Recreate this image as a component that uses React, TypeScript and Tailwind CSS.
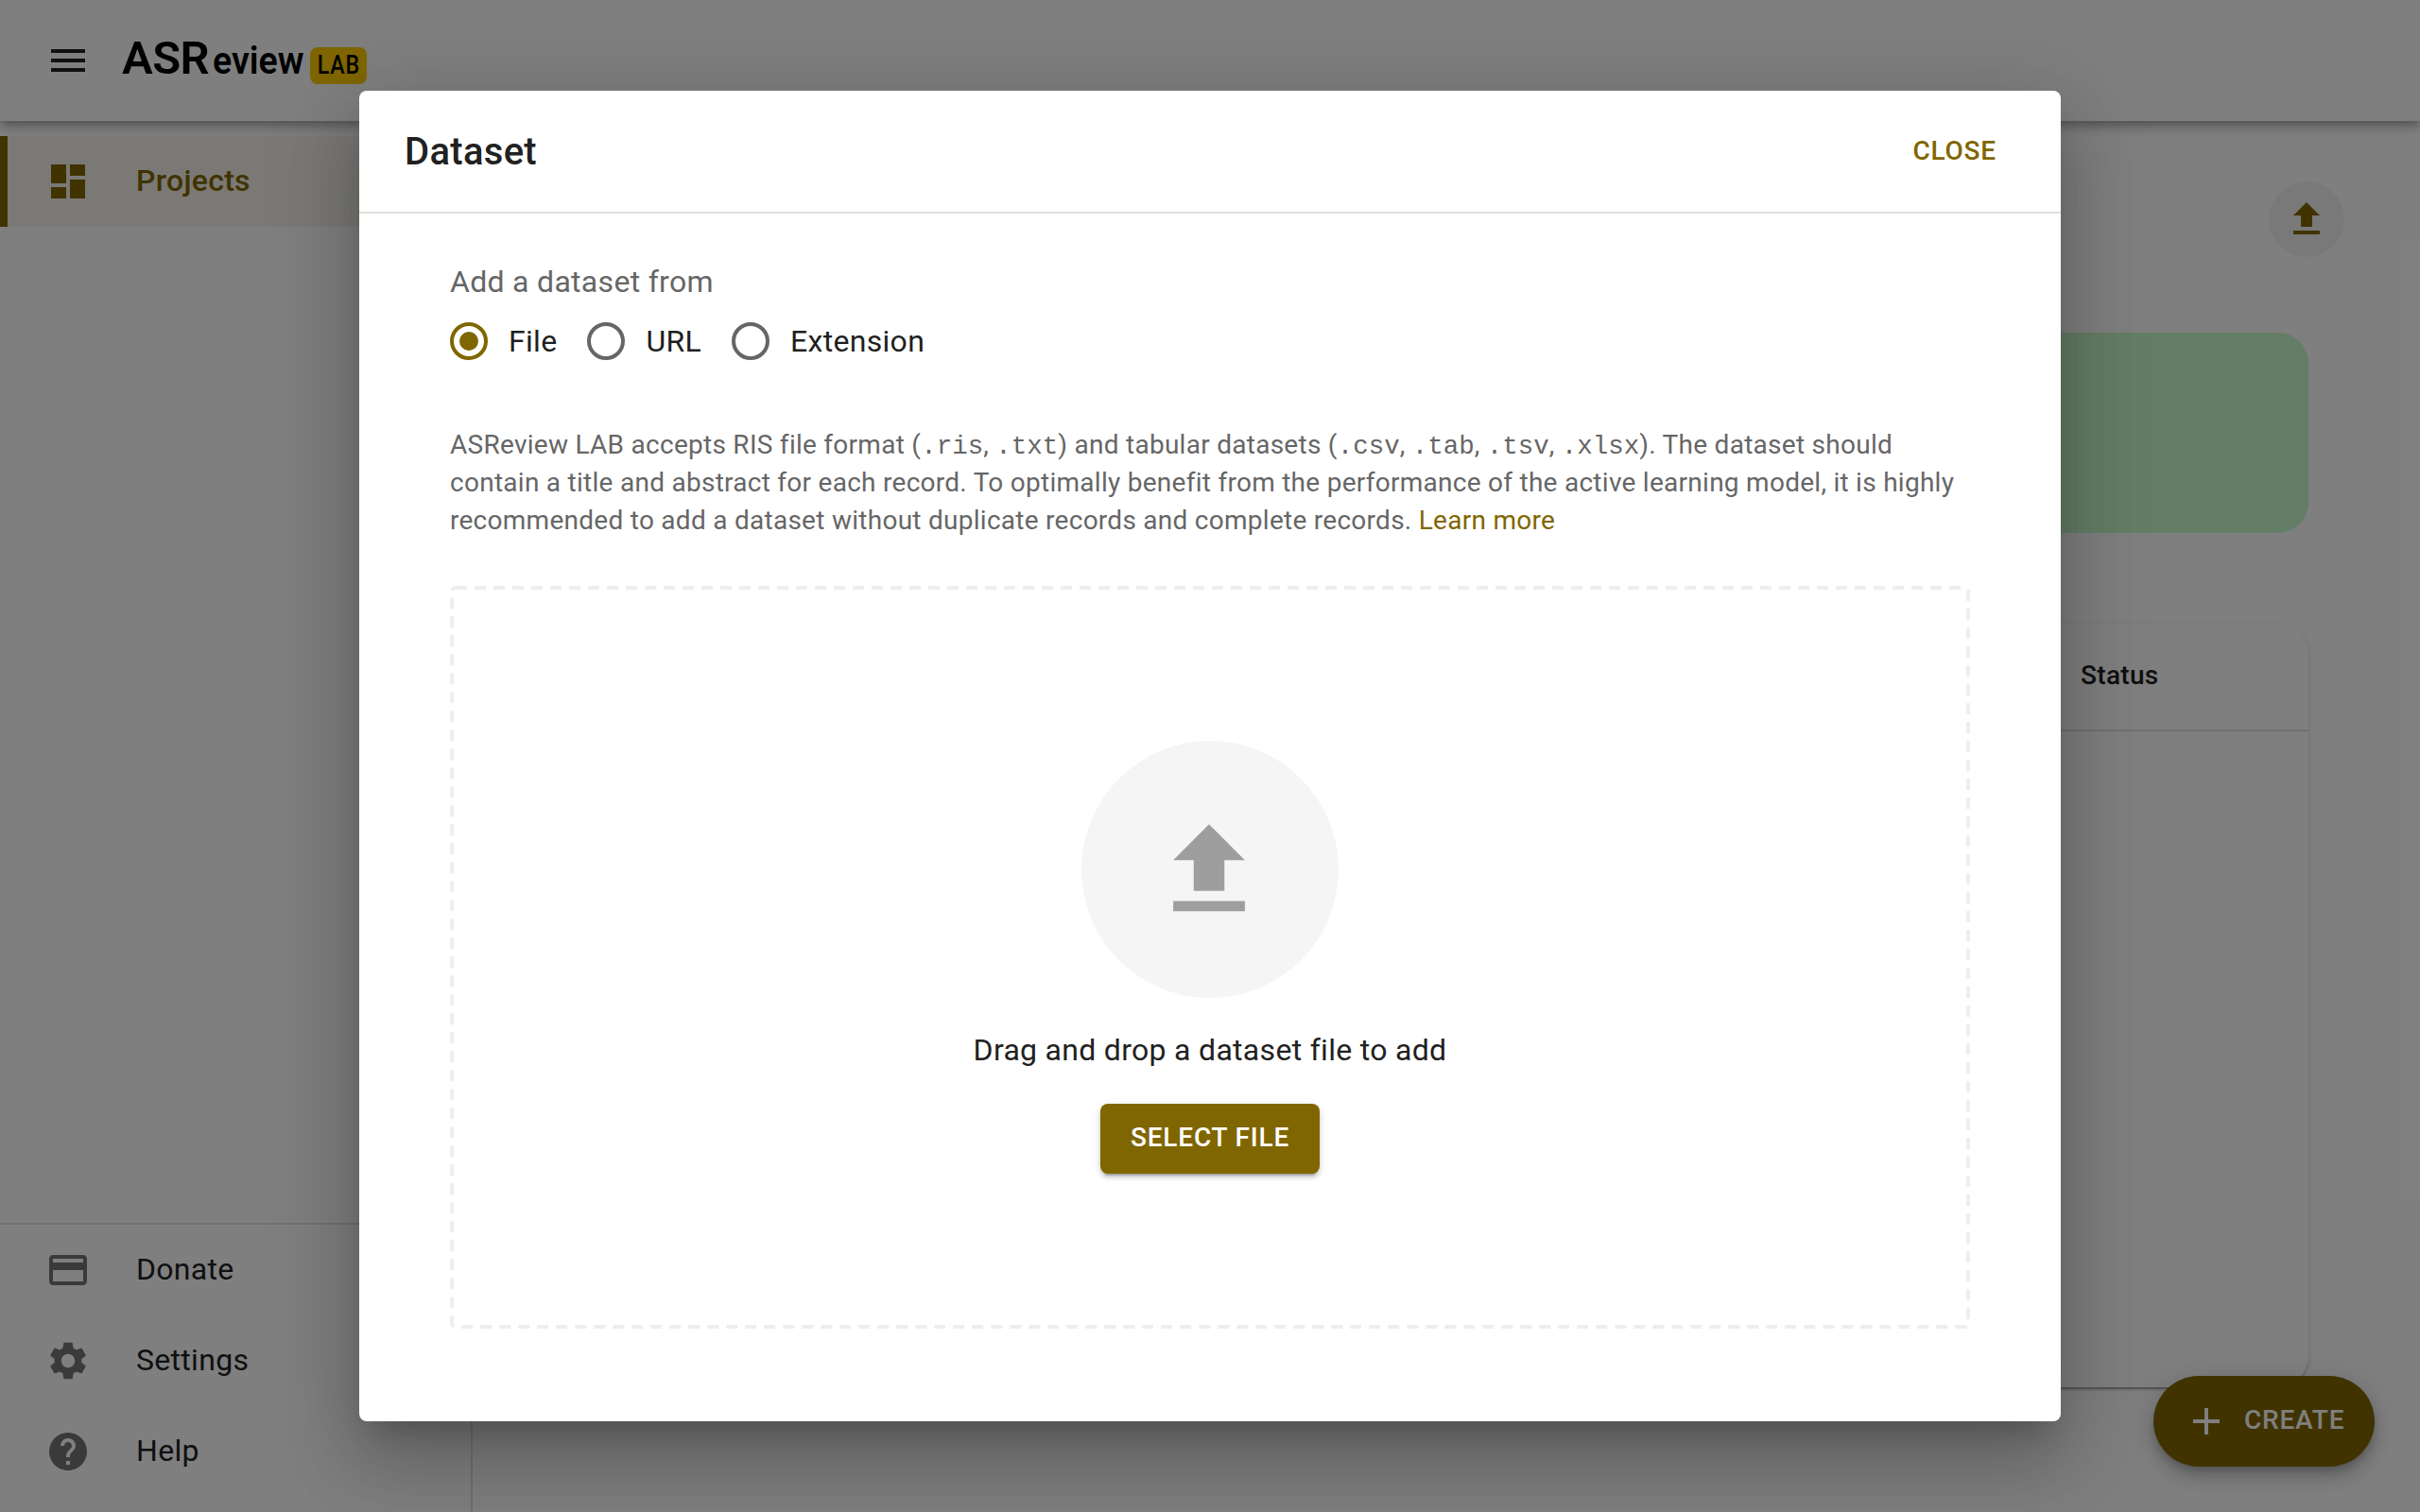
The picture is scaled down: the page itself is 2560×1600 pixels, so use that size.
import { MdAdd, MdDashboard, MdFileUpload, MdHelp, MdMenu, MdPayment, MdSettings } from "react-icons/md";

const bottomItems = [
  { label: "Donate", icon: MdPayment },
  { label: "Settings", icon: MdSettings },
  { label: "Help", icon: MdHelp },
];

const radios = [
  { label: "File", checked: true },
  { label: "URL", checked: false },
  { label: "Extension", checked: false },
];

function Radio({ label, checked }: { label: string; checked: boolean }) {
  return (
    <label className="flex items-center gap-[22px]">
      <span
        className={`flex h-10 w-10 items-center justify-center rounded-full border-[4px] ${
          checked ? "border-[#806600]" : "border-[#666666]"
        }`}
      >
        {checked && <span className="h-5 w-5 rounded-full bg-[#806600]" />}
      </span>
      <span className="text-[32px] leading-[48px] tracking-[0.3px] text-[#1f1f1f]">{label}</span>
    </label>
  );
}

function Code({ children }: { children: string }) {
  return <code className="font-['Liberation_Mono',monospace] text-[27.5px] leading-none tracking-normal">{children}</code>;
}

export default function App() {
  return (
    <div className="relative flex h-[1600px] w-[2560px] flex-col overflow-hidden bg-white font-['Roboto',sans-serif]">
      {/* App bar */}
      <header className="relative z-10 flex h-[128px] shrink-0 items-center bg-white pl-12 shadow-[0_4px_8px_-2px_rgba(0,0,0,0.2),0_8px_10px_0_rgba(0,0,0,0.14),0_2px_20px_0_rgba(0,0,0,0.12)]">
        <MdMenu className="h-12 w-12 text-[#222222]" />
        <div className="ml-[33px] flex items-baseline pb-[2px]">
          <span className="w-[96px] text-[49px] leading-none font-semibold tracking-[-0.5px] text-black">ASR</span>
          <span className="w-[103px]">
            <span className="inline-block origin-left scale-x-[0.94] text-[40px] leading-none font-semibold text-black">
              eview
            </span>
          </span>
          <span className="flex h-[39px] w-[60px] items-center justify-center rounded-lg bg-[#ffcc00]">
            <span className="inline-block scale-x-[0.83] text-[28px] leading-none font-medium tracking-[1px] text-black">
              LAB
            </span>
          </span>
        </div>
      </header>

      <div className="flex min-h-0 flex-1">
        {/* Sidebar */}
        <aside className="flex w-[500px] shrink-0 flex-col justify-between border-r-2 border-[#e0e0e0] pt-4 pb-4">
          <div className="flex h-24 items-center border-l-8 border-[#806600] bg-[#806600]/[0.08] pl-10">
            <MdDashboard className="h-12 w-12 text-[#806600]" />
            <span className="ml-12 pb-[2px] text-[32px] font-medium tracking-[0.3px] text-[#806600]">Projects</span>
          </div>
          <nav className="-mb-4 border-t-2 border-[#e0e0e0] pb-4">
            {bottomItems.map((item) => (
              <div key={item.label} className="flex h-24 items-center pl-12">
                <item.icon className="h-12 w-12 text-[#757575]" />
                <span className="ml-12 pb-[2px] text-[32px] tracking-[0.3px] text-[#212121]">{item.label}</span>
              </div>
            ))}
          </nav>
        </aside>

        {/* Main content, mostly behind the dialog */}
        <main className="flex min-w-0 flex-1 flex-col pt-16">
          <div className="flex justify-end pr-20">
            <div className="flex h-20 w-20 items-center justify-center rounded-full bg-black/[0.05]">
              <MdFileUpload className="h-12 w-12 text-[#806600]" />
            </div>
          </div>
          <div className="mt-20 mr-[118px] ml-[118px] h-[212px] rounded-[32px] bg-[#c8facc]" />
          <div className="mt-24 mr-[118px] ml-[118px] h-[808px] rounded-[32px] bg-white shadow-[0_4px_2px_-2px_rgba(0,0,0,0.2),0_2px_2px_0_rgba(0,0,0,0.14),0_2px_6px_0_rgba(0,0,0,0.12)]">
            <div className="flex h-[114px] items-center justify-end border-b-2 border-[#e0e0e0] pb-[2px]">
              <span className="w-[241px] text-[28px] font-medium tracking-[0.3px] text-[#212121]">Status</span>
            </div>
          </div>
        </main>
      </div>

      {/* Floating create button */}
      <button className="absolute top-[1456px] left-[2278px] flex h-24 w-[234px] items-center rounded-full bg-[#806600] pl-[32px] text-[28px] font-medium tracking-[0.8px] text-white shadow-[0_6px_10px_-2px_rgba(0,0,0,0.2),0_12px_20px_0_rgba(0,0,0,0.14),0_2px_36px_0_rgba(0,0,0,0.12)]">
        <MdAdd className="h-12 w-12" />
        <span className="ml-[16px] pb-[2px]">CREATE</span>
      </button>

      {/* Dialog */}
      <div className="absolute inset-0 z-20 flex items-center justify-center bg-black/50">
        <div className="flex h-[1408px] w-[1800px] flex-col rounded-lg bg-white shadow-[0_22px_30px_-14px_rgba(0,0,0,0.2),0_48px_76px_6px_rgba(0,0,0,0.14),0_18px_92px_16px_rgba(0,0,0,0.12)]">
          <div className="flex h-[130px] shrink-0 items-center justify-between border-b-2 border-[#e0e0e0] pr-[68px] pl-12">
            <h2 className="pt-[2px] text-[40px] font-medium tracking-[0.3px] text-[#212121]">Dataset</h2>
            <button className="text-[28px] font-medium tracking-[0.8px] text-[#806600]">CLOSE</button>
          </div>

          <div className="flex min-h-0 flex-1 flex-col px-24 pt-12">
            <p className="text-[32px] leading-[48px] tracking-[0.3px] text-[#666666]">Add a dataset from</p>
            <div className="mt-[-3px] flex h-[84px] items-center gap-8">
              {radios.map((radio) => (
                <Radio key={radio.label} label={radio.label} checked={radio.checked} />
              ))}
            </div>

            <p className="mt-12 text-[28px] leading-[40px] tracking-[0.27px] text-[#666666]">
              ASReview LAB accepts RIS file format (<Code>.ris</Code>, <Code>.txt</Code>) and tabular datasets (
              <Code>.csv</Code>, <Code>.tab</Code>, <Code>.tsv</Code>, <Code>.xlsx</Code>). The dataset should contain a
              title and abstract for each record. To optimally benefit from the performance of the active learning model,
              it is highly recommended to add a dataset without duplicate records and complete records.{" "}
              <a className="text-[#806600]">Learn more</a>
            </p>

            <div className="relative mt-[49px] flex h-[786px] flex-col items-center justify-center rounded-lg">
              <svg className="absolute inset-0 h-full w-full" fill="none">
                <rect x="2" y="2" width="1604" height="782" rx="4" stroke="#eeeeee" strokeWidth="4" strokeDasharray="12 8" />
              </svg>
              <div className="flex h-[272px] w-[272px] items-center justify-center rounded-full bg-[#f5f5f5]">
                <MdFileUpload className="mt-[2px] -ml-[2px] h-[130px] w-[130px] text-[#9e9e9e]" />
              </div>
              <p className="mt-[31px] mb-[1px] text-[32px] leading-[48px] tracking-[0.3px] text-[#212121]">
                Drag and drop a dataset file to add
              </p>
              <button className="mt-8 h-[74px] w-[232px] rounded-lg bg-[#806600] pb-[2px] text-[28px] font-medium tracking-[0.8px] text-white shadow-[0_6px_2px_-4px_rgba(0,0,0,0.2),0_4px_4px_0_rgba(0,0,0,0.14),0_2px_10px_0_rgba(0,0,0,0.12)]">
                SELECT FILE
              </button>
            </div>
          </div>
        </div>
      </div>
    </div>
  );
}
